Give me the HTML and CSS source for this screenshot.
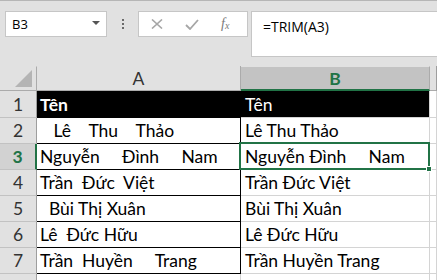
FILE: index.html
```html
<!DOCTYPE html>
<html lang="vi">
<head>
    <meta charset="UTF-8">
    <title>TRIM</title>
    <link rel="stylesheet" href="styles.css">
</head>
<body>

    <!-- Formula bar -->
    <div class="toolbar">
        <div class="namebox">
            <span>B3</span>
            <span class="caret"></span>
        </div>
        <div class="grip"><i></i><i></i><i></i></div>
        <div class="fx-buttons">
            <svg class="btn-icon" width="12" height="10" viewBox="0 0 12 10"><path d="M1 0.5 L11 9.5 M11 0.5 L1 9.5" stroke="#a6a6a6" stroke-width="1.6" fill="none"/></svg>
            <svg class="btn-icon" width="14" height="11" viewBox="0 0 14 11"><path d="M1 6 L5 10 L13 1" stroke="#a6a6a6" stroke-width="1.8" fill="none"/></svg>
            <span class="fx">f<sub>x</sub></span>
        </div>
        <div class="formula">=TRIM(A3)</div>
    </div>

    <!-- Sheet -->
    <div class="sheet">
        <div class="corner"><svg width="18" height="18" viewBox="0 0 18 18"><path d="M17 0 L17 17 L0 17 Z" fill="#b4b4b4"/></svg></div>
        <div class="col-head">A</div>
        <div class="col-head active">B</div>
        <div class="col-head rest"></div>

        <div class="row-head tall">1</div>
        <div class="cell a title bold">Tên</div>
        <div class="cell b title">Tên</div>
        <div class="cell rest"></div>

        <div class="row-head">2</div>
        <div class="cell a">   Lê    Thu    Thảo</div>
        <div class="cell b">Lê Thu Thảo</div>
        <div class="cell rest"></div>

        <div class="row-head active">3</div>
        <div class="cell a">Nguyễn     Đình     Nam</div>
        <div class="cell b selected">Nguyễn Đình     Nam<span class="handle"></span></div>
        <div class="cell rest"></div>

        <div class="row-head">4</div>
        <div class="cell a">Trần  Đức  Việt</div>
        <div class="cell b">Trần Đức Việt</div>
        <div class="cell rest"></div>

        <div class="row-head">5</div>
        <div class="cell a">  Bùi Thị Xuân</div>
        <div class="cell b">Bùi Thị Xuân</div>
        <div class="cell rest"></div>

        <div class="row-head">6</div>
        <div class="cell a">Lê  Đức Hữu</div>
        <div class="cell b">Lê Đức Hữu</div>
        <div class="cell rest"></div>

        <div class="row-head">7</div>
        <div class="cell a">Trần  Huyền     Trang</div>
        <div class="cell b">Trần Huyền Trang</div>
        <div class="cell rest"></div>

        <div class="row-head last"></div>
        <div class="cell a last"></div>
        <div class="cell b last"></div>
        <div class="cell rest last"></div>
    </div>

</body>
</html>
```

FILE: styles.css
```css
body {
    margin: 0;
    width: 437px;
    height: 280px;
    overflow: hidden;
    background-color: #ffffff;
    font-family: "Open Sans", "Noto Sans", sans-serif;
}

/* Formula bar */
.toolbar {
    height: 66px;
    box-sizing: border-box;
    border-top: 1px solid #b6b6b6;
    background-color: #e1e1e1;
    display: flex;
    align-items: flex-start;
    padding-top: 10px;
    padding-left: 5px;
}

.namebox {
    width: 102px;
    height: 26px;
    box-sizing: border-box;
    background-color: #ffffff;
    border: 1px solid #c6c6c6;
    display: flex;
    align-items: center;
    justify-content: space-between;
    padding: 0 6px 0 6px;
    font-size: 13px;
    color: #000;
}

.caret {
    width: 0;
    height: 0;
    border-left: 4px solid transparent;
    border-right: 4px solid transparent;
    border-top: 4px solid #555;
    margin-top: -3px;
}

.grip {
    width: 31px;
    display: flex;
    flex-direction: column;
    align-items: center;
    gap: 2px;
    padding-top: 8px;
}

.grip i {
    width: 2px;
    height: 2px;
    background-color: #6a6a6a;
}

.fx-buttons {
    width: 110px;
    height: 26px;
    box-sizing: border-box;
    background-color: #ffffff;
    border: 1px solid #c6c6c6;
    display: flex;
    align-items: center;
    padding-left: 12px;
}

.btn-icon:nth-child(2) {
    margin-left: 22px;
}

.fx {
    margin-left: 22px;
    font-family: "Liberation Serif", serif;
    font-style: italic;
    font-size: 14px;
    color: #7a7a7a;
}

.fx sub {
    font-size: 10px;
    vertical-align: -1px;
}

.formula {
    flex: 1;
    margin-left: 3px;
    height: 46px;
    box-sizing: border-box;
    background-color: #ffffff;
    border: 1px solid #c6c6c6;
    border-right: none;
    padding: 5px 0 0 11px;
    font-size: 14px;
    color: #000;
}

/* Sheet grid */
.sheet {
    display: grid;
    grid-template-columns: 37px 204px 189px 7px;
    grid-template-rows: 25px 27px repeat(6, 26px) 6px;
    font-family: "Lato", sans-serif;
    font-size: 17.5px;
}

.corner, .col-head, .row-head, .cell {
    box-sizing: border-box;
    border-right: 1px solid #d4d4d4;
    border-bottom: 1px solid #d4d4d4;
    white-space: pre;
}

.corner {
    background-color: #e1e1e1;
    border-right-color: #ababab;
    border-bottom-color: #ababab;
    display: flex;
    align-items: flex-end;
    justify-content: flex-end;
    padding: 0 3px 2px 0;
    border-top: 1px solid transparent;
}

.col-head {
    background-color: #e1e1e1;
    border-right-color: #ababab;
    border-bottom-color: #ababab;
    display: flex;
    align-items: center;
    justify-content: center;
    color: #333;
    padding-top: 1px;
}

.col-head.active {
    background-color: #c3c3c3;
    border-top: 1px solid #e1e1e1;
    border-bottom: 2px solid #217346;
    color: #217346;
    font-weight: bold;
}

.col-head.rest {
    border-right-color: #9e9e9e;
}

.row-head {
    background-color: #e1e1e1;
    border-right-color: #9e9e9e;
    border-bottom-color: #c2c2c2;
    display: flex;
    align-items: center;
    justify-content: center;
    color: #333;
}

.row-head.active {
    background-color: #d2d2d2;
    border-right: 2px solid #217346;
    color: #217346;
    font-weight: bold;
}

.cell {
    padding-left: 3px;
    display: flex;
    align-items: center;
    color: #000;
}

.cell.a {
    border-right-color: #000;
    border-bottom-color: #000;
}

.cell.b {
    padding-left: 4px;
}

.cell.title {
    background-color: #000;
    color: #fff;
}

.last {
    border-bottom: none;
}

.cell.a.last {
    border-right-color: #d4d4d4;
}

.bold {
    font-weight: bold;
}

/* Active cell outline */
.selected {
    position: relative;
}

.selected::after {
    content: "";
    position: absolute;
    top: -2px;
    left: -2px;
    right: -1px;
    bottom: -1px;
    border: 2px solid #217346;
    pointer-events: none;
}

.handle {
    position: absolute;
    right: -3px;
    bottom: -3px;
    width: 6px;
    height: 6px;
    background-color: #217346;
    border: 1px solid #fff;
    box-sizing: border-box;
    z-index: 2;
}
```
